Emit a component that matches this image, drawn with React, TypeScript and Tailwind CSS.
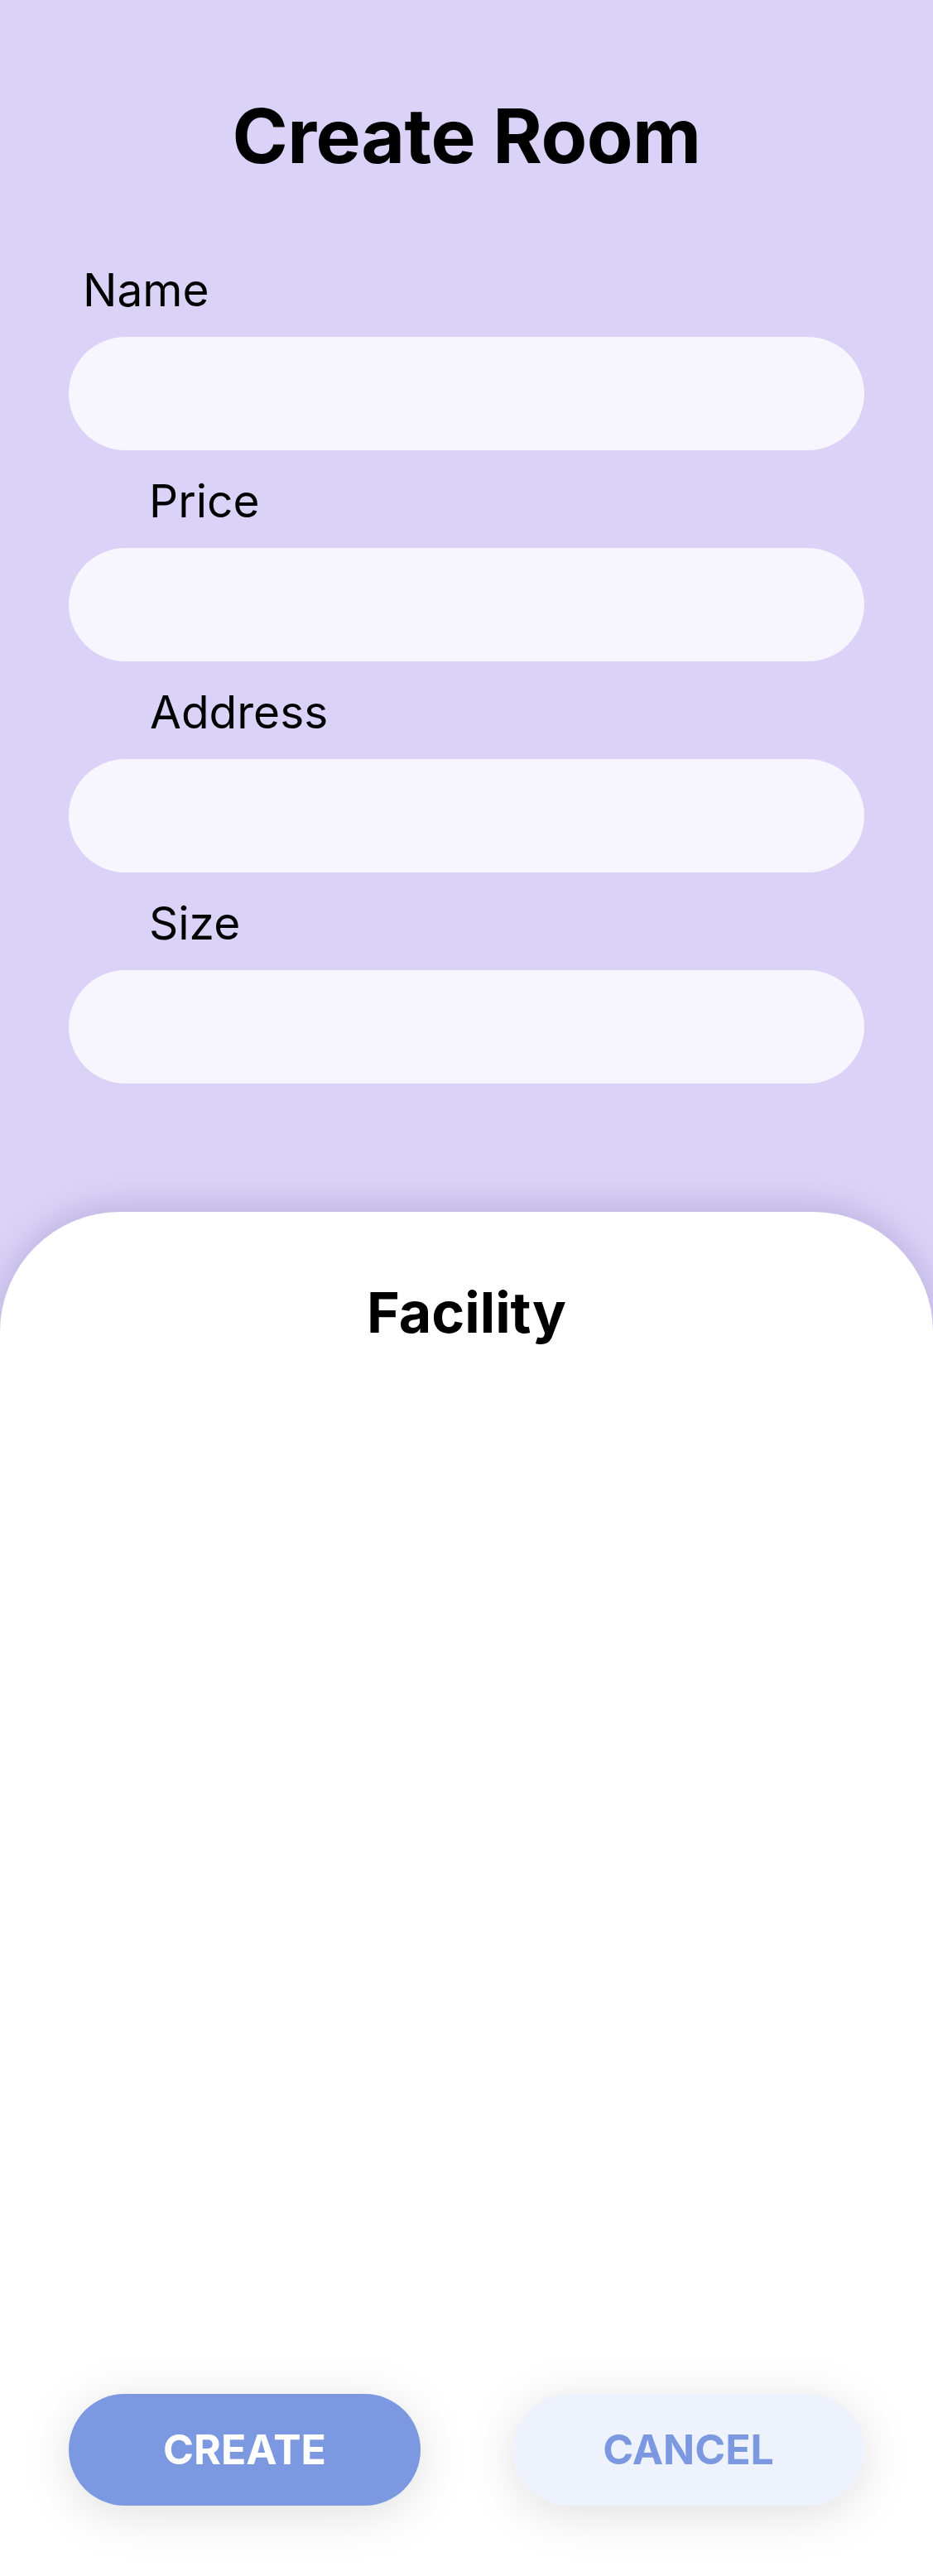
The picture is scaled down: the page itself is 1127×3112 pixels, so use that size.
import React from "react";

const font = { fontFamily: "Inter, 'Noto Sans', sans-serif" };

function Field({ label, indent }: { label: string; indent: string }) {
  return (
    <div className="flex flex-col">
      <div className={`text-[55px] leading-none text-black ${indent}`}>{label}</div>
      <div className="mt-[29px] h-[137px] w-full rounded-full bg-[#f7f5fe]" />
    </div>
  );
}

export default function App() {
  return (
    <div className="w-[1127px] h-[3112px] overflow-hidden bg-[#dbd3f7] flex flex-col" style={font}>
      <div className="flex flex-col px-[83px] pt-[119px]">
        <h1 className="text-center text-[91px] font-bold leading-none text-black tracking-[-0.5px]">Create Room</h1>
        <div className="mt-[113px] flex flex-col gap-[34px]">
          <Field label="Name" indent="ml-[17px]" />
          <Field label="Price" indent="ml-[97px]" />
          <Field label="Address" indent="ml-[98px]" />
          <Field label="Size" indent="ml-[97px]" />
        </div>
      </div>
      <div className="mt-[155px] flex-1 flex flex-col rounded-t-[145px] bg-white shadow-[0_-6px_40px_rgba(70,50,140,0.22)]">
        <h2 className="pt-[87px] text-center text-[68px] font-bold leading-none text-black">Facility</h2>
        <div className="mt-auto mb-[85px] flex justify-between px-[83px]">
          <button className="h-[135px] w-[425px] rounded-full bg-[#7b98e1] text-[50px] font-bold text-white shadow-[0_10px_60px_rgba(0,0,0,0.13)]">
            CREATE
          </button>
          <button className="h-[135px] w-[425px] rounded-full bg-[#eef2fd] text-[50px] font-bold text-[#7b98e1] shadow-[0_10px_60px_rgba(0,0,0,0.13)]">
            CANCEL
          </button>
        </div>
      </div>
    </div>
  );
}
